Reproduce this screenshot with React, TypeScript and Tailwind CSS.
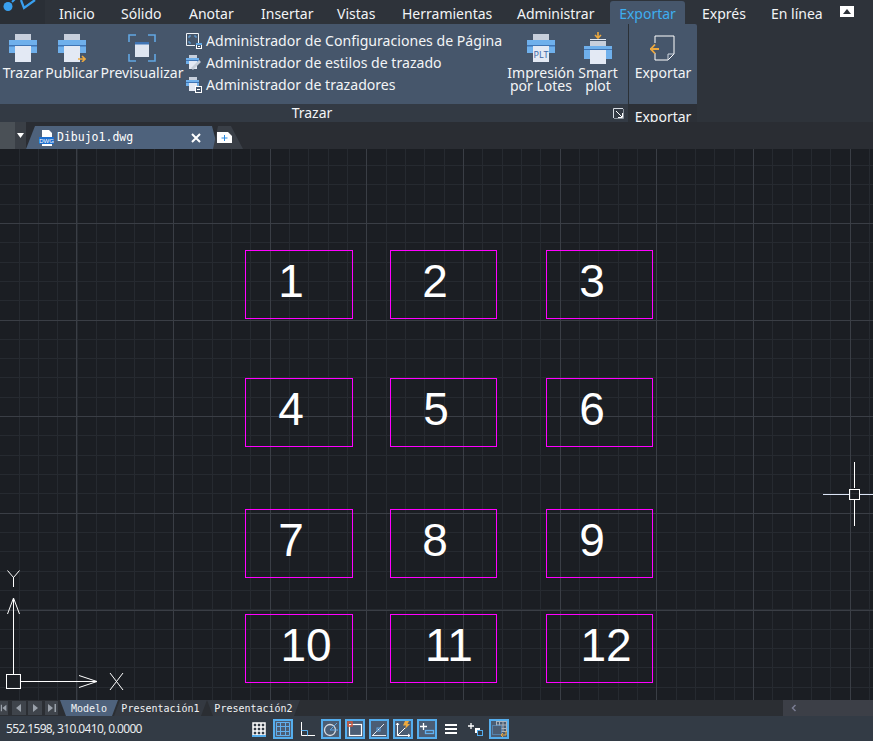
const minorX = Array.from({ length: 46 }, (_, i) => Math.floor(270.3 + (i - 14) * 19.33) + 0.5)
const minorY = Array.from({ length: 30 }, (_, i) => Math.floor(171 + (i - 9) * 19.33) + 0.5)
const majorX = [76.5, 173.5, 270.5, 366.5, 463.5, 560.5, 656.5, 753.5, 850.5]
const majorY = [74.5, 171.5, 267.5, 364.5, 461.5]

const boxes = [
  { n: '1', x: 245, y: 101, w: 108, tx: 291 },
  { n: '2', x: 390, y: 101, w: 107, tx: 435 },
  { n: '3', x: 546, y: 101, w: 107, tx: 592 },
  { n: '4', x: 245, y: 229, w: 108, tx: 291 },
  { n: '5', x: 390, y: 229, w: 107, tx: 436 },
  { n: '6', x: 546, y: 229, w: 107, tx: 592 },
  { n: '7', x: 245, y: 360, w: 108, tx: 291 },
  { n: '8', x: 390, y: 360, w: 107, tx: 435 },
  { n: '9', x: 546, y: 360, w: 107, tx: 592 },
  { n: '10', x: 245, y: 465, w: 108, tx: 306 },
  { n: '11', x: 390, y: 465, w: 107, tx: 449 },
  { n: '12', x: 546, y: 465, w: 107, tx: 606 },
]

const menu = [
  { t: 'Inicio', cls: 'w-[62px]' },
  { t: 'Sólido', cls: 'w-[68px]' },
  { t: 'Anotar', cls: 'w-[72px]' },
  { t: 'Insertar', cls: 'w-[76px]' },
  { t: 'Vistas', cls: 'w-[65px]' },
  { t: 'Herramientas', cls: 'w-[115px]' },
  { t: 'Administrar', cls: 'w-[93px]' },
]

function Printer({ badge }: { badge?: boolean }) {
  return (
    <svg width="28" height="28" viewBox="0 0 28 28">
      <rect x="6" y="0" width="16" height="6" fill="#c7cfdc" />
      <rect x="0" y="6" width="28" height="13" fill="#6fb0ec" />
      <rect x="0" y="11" width="28" height="1.5" fill="#3f74b4" />
      <rect x="6" y="12" width="16" height="16" fill="#e3e9f4" />
      {badge && <path d="M20 25h7M24 22l3 3-3 3" stroke="#eda93f" strokeWidth="1.6" fill="none" />}
    </svg>
  )
}

function Preview() {
  return (
    <svg width="28" height="28" viewBox="0 0 28 28" fill="none">
      <path d="M1 8V1h7M20 1h7v7M27 20v7h-7M8 27H1v-7" stroke="#62a6e2" strokeWidth="1.6" />
      <rect x="7" y="8" width="14" height="15" fill="#dfe5f0" />
      <rect x="7" y="8" width="14" height="2.500" fill="#3f74b4" />
    </svg>
  )
}

function SmallIcon({ kind }: { kind: 'page' | 'style' | 'plot' }) {
  if (kind === 'page') {
    return (
      <svg width="16" height="16" viewBox="0 0 16 16" fill="none">
        <path d="M.5 12.500V.5h12v9.500M.5 12.500H9" stroke="#f0f3f7" />
        <path d="M3 5V3h2M3 8v2h2M8 3h2v2" stroke="#62a6e2" />
        <rect x="10.500" y="10.500" width="5" height="5" fill="#46566b" stroke="#fff" />
        <rect x="10" y="10" width="6" height="2" fill="#62a6e2" />
        <rect x="12" y="13" width="2" height="1" fill="#fff" />
      </svg>
    )
  }
  return (
    <svg width="16" height="16" viewBox="0 0 16 16" fill="none">
      <rect x="3" y="0" width="8" height="3" fill="#c7cfdc" />
      <rect x="0" y="3" width="13" height="6" fill="#6fb0ec" />
      <rect x="0" y="5" width="13" height="1" fill="#3f74b4" />
      <rect x="3" y="6" width="8" height="8" fill="#e3e9f4" />
      {kind === 'style' ? (
        <path d="M6 14l8-8" stroke="#c6ced9" strokeWidth="2.600" />
      ) : (
        <>
          <rect x="9.500" y="9.500" width="6" height="6" fill="#46566b" stroke="#fff" />
          <rect x="11" y="12" width="3" height="1" fill="#fff" />
        </>
      )}
    </svg>
  )
}

function BatchPlot() {
  return (
    <svg width="28" height="28" viewBox="0 0 28 28">
      <rect x="6" y="0" width="16" height="6" fill="#c7cfdc" />
      <rect x="0" y="6" width="28" height="13" fill="#6fb0ec" />
      <rect x="0" y="11" width="28" height="1.500" fill="#3f74b4" />
      <rect x="6" y="12" width="16" height="16" fill="#e3e9f4" />
      <text x="14" y="24" textAnchor="middle" fontSize="9" fill="#3f6aa8" fontFamily="'Noto Sans', sans-serif">PLT</text>
    </svg>
  )
}

function SmartPlot() {
  return (
    <svg width="28" height="32" viewBox="0 0 28 32" className="-mb-[2px]">
      <path d="M14 0v5M11 3l3 3 3-3" stroke="#eda93f" strokeWidth="1.600" fill="none" />
      <rect x="6" y="7" width="16" height="1" fill="#e3e9f4" />
      <rect x="6" y="9" width="16" height="5" fill="#c7cfdc" />
      <rect x="0" y="14" width="28" height="13" fill="#6fb0ec" />
      <rect x="0" y="17" width="28" height="1" fill="#3f74b4" />
      <rect x="6" y="18" width="16" height="14" fill="#e3e9f4" />
    </svg>
  )
}

function ExportIcon() {
  return (
    <svg width="26" height="26" viewBox="0 0 26 26" fill="none">
      <path d="M5 8V1h19v18l-6 6H5v-7" stroke="#fff" />
      <path d="M18 25v-6h6" stroke="#cfd6e0" />
      <path d="M0 14h9M5 9.500L.8 14 5 18.500" stroke="#eda93f" strokeWidth="1.800" />
    </svg>
  )
}

function BigButton({ label, icon, className }: { label: React.ReactNode; icon: React.ReactNode; className: string }) {
  return (
    <div className={`flex flex-col items-center shrink-0 ${className}`}>
      <div className="flex items-start justify-center">{icon}</div>
      <div className="text-center leading-[13px] mt-[4px] whitespace-nowrap">{label}</div>
    </div>
  )
}

function Ribbon() {
  return (
    <div className="flex h-[98px] shrink-0">
      <div className="w-[628px] flex flex-col">
        <div className="h-[80px] bg-[#46566b] flex pt-[10px] relative">
          <BigButton className="w-[46px]" label="Trazar" icon={<Printer />} />
          <BigButton className="w-[52px]" label="Publicar" icon={<Printer badge />} />
          <BigButton className="w-[84px] ml-[2px]" label="Previsualizar" icon={<Preview />} />
          <div className="ml-[2px] -mt-[4px] flex flex-col w-[319px]">
            {[
              { kind: 'page' as const, t: 'Administrador de Configuraciones de Página' },
              { kind: 'style' as const, t: 'Administrador de estilos de trazado' },
              { kind: 'plot' as const, t: 'Administrador de trazadores' },
            ].map((r) => (
              <div key={r.t} className="h-[22px] flex items-center gap-[4px] whitespace-nowrap text-[14.1px]">
                <SmallIcon kind={r.kind} />
                <span>{r.t}</span>
              </div>
            ))}
          </div>
          <BigButton className="w-[72px]" label={<>Impresión<br />por Lotes</>} icon={<BatchPlot />} />
          <BigButton className="w-[42px] -mt-[2px]" label={<>Smart<br />plot</>} icon={<SmartPlot />} />
        </div>
        <div className="h-[18px] bg-[#333a44] relative flex items-center justify-center pr-[4px]">
          <span className="leading-none">Trazar</span>
          <svg className="absolute right-[4px] top-[4px]" width="11" height="11" viewBox="0 0 11 11" fill="none">
            <path d="M0.500 10V.5H10" stroke="#d7dce3" />
            <path d="M3 3l6 6M5 9.500h4.500V5" stroke="#fff" />
            <path d="M10.500 1v9.500H1" stroke="#8d949e" />
          </svg>
        </div>
      </div>
      <div className="w-[1px] bg-[#2b3036]" />
      <div className="w-[68px] flex flex-col">
        <div className="h-[80px] bg-[#46566b] flex flex-col items-center pt-[11px] rounded-tr-[2px]">
          <ExportIcon />
          <div className="mt-[5px] leading-[13px]">Exportar</div>
        </div>
        <div className="h-[18px] bg-[#2c3037] flex justify-center overflow-hidden">
          <span className="leading-[26px]">Exportar</span>
        </div>
      </div>
    </div>
  )
}

function DrawingSheet() {
  return (
    <div className="relative h-[551px] bg-[#1b1e23] overflow-hidden shrink-0">
      <svg className="absolute inset-0" width="873" height="551">
        {minorX.map((x) => <line key={x} x1={x} x2={x} y1="0" y2="551" stroke="#262a30" />)}
        {minorY.map((y) => <line key={y} y1={y} y2={y} x1="0" x2="873" stroke="#262a30" />)}
        {majorX.map((x) => <line key={x} x1={x} x2={x} y1="0" y2="551" stroke="#3a3e45" />)}
        {majorY.map((y) => <line key={y} y1={y} y2={y} x1="0" x2="873" stroke="#3a3e45" />)}
      </svg>
      {boxes.map((b) => (
        <div key={b.n}>
          <div className="absolute h-[69px] border border-[#ff00ff]" style={{ left: b.x, top: b.y, width: b.w }} />
          <div
            className="absolute w-[80px] -ml-[40px] text-center text-white text-[46px] leading-[69px] font-['Liberation_Sans',sans-serif]"
            style={{ left: b.tx, top: b.y - 3 }}
          >
            {b.n}
          </div>
        </div>
      ))}
      <svg className="absolute left-0 top-[421px]" width="130" height="130" viewBox="0 420 130 130" fill="none" stroke="#fff">
        <rect x="6.500" y="524.500" width="14" height="14" />
        <path d="M13.500 524V448.500M7.500 464l6-16 6 16" />
        <path d="M21 531.500h76M79 525.500l18 6-18 6" />
        <path d="M7.500 420.500l6 7 6-7M13.500 427v10" />
        <path d="M110 523l13 17M123 523l-13 17" />
      </svg>
      <svg className="absolute left-[823px] top-[313px]" width="50" height="64" viewBox="0 0 50 64" fill="none">
        <path d="M0 32.500h26M37 32.500h13" stroke="#dbe4f5" />
        <path d="M31.500 0v26M31.500 37v27" stroke="#fff" />
        <rect x="26.500" y="27.500" width="10" height="10" stroke="#fff" />
      </svg>
    </div>
  )
}

function NavButton({ d, className }: { d: string; className: string }) {
  return (
    <div className={`h-[14px] bg-[#3f444b] flex items-center justify-center ${className}`}>
      <svg width="10" height="10" viewBox="0 0 10 10" fill="#9aa1aa"><path d={d} /></svg>
    </div>
  )
}

function StatusIcon({ active, children }: { active?: boolean; children: React.ReactNode }) {
  return (
    <div className={`w-[20px] h-[20px] flex items-center justify-center shrink-0 ${active ? 'bg-[#4b5d74] border-2 border-[#55aeee]' : ''}`}>
      <svg width="16" height="16" viewBox="0 0 16 16" fill="none" stroke="#fff" className="shrink-0">{children}</svg>
    </div>
  )
}

function StatusBar() {
  return (
    <div className="h-[25px] bg-[#333b45] flex items-center shrink-0">
      <div className="w-[249px] pl-[6px] text-[12px] tracking-[-0.65px] text-[#e8ebee] whitespace-nowrap">552.1598, 310.0410, 0.0000</div>
      <div className="flex items-center gap-[4px]">
        <StatusIcon>
          <path d="M2 2h12v12H2zM2 6h12M2 10h12M6 2v12M10 2v12" strokeWidth="1.500" />
          <path d="M1 15h14" stroke="#55aeee" strokeWidth="2" />
        </StatusIcon>
        <StatusIcon active>
          <path d="M1.500 1.500h13v13h-13zM1.500 5.500h13M1.500 10.500h13M5.500 1.500v13M10.500 1.500v13" stroke="#62b0ee" />
        </StatusIcon>
        <StatusIcon>
          <path d="M2.500 1v13.500H16" />
          <path d="M2.500 9.500h6v5" stroke="#55aeee" />
        </StatusIcon>
        <StatusIcon active>
          <circle cx="7" cy="9" r="5.500" stroke="#d7dce3" strokeWidth="1.300" />
          <path d="M7 9l7-7M7 9h8" stroke="#62a6e2" />
        </StatusIcon>
        <StatusIcon active>
          <rect x="2.500" y="3.500" width="12" height="11" strokeWidth="1.200" />
          <rect x="1" y="1" width="4" height="4" stroke="#d0583f" strokeWidth="1.500" />
        </StatusIcon>
        <StatusIcon active>
          <path d="M1 14.500h14M2 14L13 3" stroke="#e6ebf2" />
          <rect x="6" y="7" width="3" height="3" stroke="#62a6e2" />
        </StatusIcon>
        <StatusIcon active>
          <path d="M2.500 2v12.500H15M2.500 14.500L10 7M1 4l1.500-2L4 4M13 13l2 1.500-2 1.500" />
          <path d="M10 0h4l-1.500 3H15l-5 5 1-3.500H8z" fill="#eda93f" stroke="none" />
        </StatusIcon>
        <StatusIcon active>
          <path d="M1 5.500h7M4.500 2v7" strokeWidth="1.300" />
          <rect x="6.500" y="9.500" width="8" height="3" stroke="#62b0ee" strokeWidth="1.300" />
        </StatusIcon>
        <div className="w-[12px] h-[10px] ml-[4px] flex flex-col justify-between">
          <div className="h-[2px] bg-white" />
          <div className="h-[2px] bg-white" />
          <div className="h-[2px] bg-white" />
        </div>
        <svg className="ml-[7px]" width="16" height="16" viewBox="0 0 16 16" fill="none">
          <path d="M0 5h6M3 2v6" stroke="#fff" strokeWidth="1.300" />
          <rect x="7" y="7" width="5" height="5" fill="#fff" />
          <rect x="9.500" y="9.500" width="5" height="5" fill="#333b45" stroke="#55aeee" />
        </svg>
        <div className="ml-[1px]">
          <StatusIcon active>
            <rect x="5.500" y="0.500" width="10" height="10" stroke="#aab2bc" />
            <path d="M8.500 .5v10M12 .5v10M5.500 4h10M5.500 7.500h10" stroke="#aab2bc" />
            <rect x="1.500" y="4.500" width="9" height="9" fill="#4b5d74" stroke="#62a6e2" strokeDasharray="1 1" />
            <path d="M15 10v4h-5M12 12l-2 2 2 2" stroke="#eda93f" />
          </StatusIcon>
        </div>
      </div>
    </div>
  )
}

export default function App() {
  return (
    <div className="w-[873px] h-[741px] bg-[#2e333a] overflow-hidden flex flex-col text-[14px] text-[#f2f4f6] font-['Noto_Sans',sans-serif]">
      <div className="h-[24px] flex items-center shrink-0 relative">
        <svg className="absolute left-0 top-0 w-[45px] h-[24px]" viewBox="0 0 45 24" fill="none">
          <rect width="45" height="24" fill="#2a2f36" />
          <circle cx="8" cy="6.500" r="4.500" fill="#39a0f0" />
          <path d="M12 2l3-3" stroke="#39a0f0" strokeWidth="2" />
          <path d="M21 0l3 8 11-8" stroke="#39a0f0" strokeWidth="2.200" />
        </svg>
        <div className="ml-[59px] flex pt-[2px]">
          {menu.map((m) => <span key={m.t} className={`whitespace-nowrap ${m.cls}`}>{m.t}</span>)}
        </div>
        <div className="h-[23px] mt-[1px] pt-[1px] w-[75px] rounded-t-[3px] bg-[#46566b] text-[#3eaef0] flex items-center justify-center">Exportar</div>
        <span className="ml-[17px] w-[69px] pt-[2px]">Exprés</span>
        <span className="w-[69px] pt-[2px] whitespace-nowrap">En línea</span>
        <div className="w-[14px] h-[11px] mb-[2px] bg-white flex items-center justify-center">
          <svg width="8" height="5" viewBox="0 0 8 5"><path d="M0 5L4 0l4 5z" fill="#2e333a" /></svg>
        </div>
      </div>
      <Ribbon />
      <div className="h-[27px] bg-[#2a2d33] flex shrink-0">
        <div className="w-[15px] bg-[#4a5056]" />
        <div className="w-[11px] bg-[#3a3f46] flex items-center justify-center">
          <svg width="7" height="5" viewBox="0 0 7 5"><path d="M0 0h7L3.500 5z" fill="#fff" /></svg>
        </div>
        <div className="mt-[4px] w-[192px] h-[23px] bg-[#4e627c] flex items-center [clip-path:polygon(9px_0,186px_0,192px_100%,0_100%)]">
          <svg className="ml-[13px]" width="15" height="16" viewBox="0 0 15 16">
            <path d="M3 0h7l3 3v13H3z" fill="#fff" />
            <rect x="0" y="7" width="15" height="7" fill="#1d6fd0" />
            <text x="7.500" y="13" textAnchor="middle" fontSize="6" fill="#fff" fontFamily="'Liberation Sans', sans-serif">DWG</text>
          </svg>
          <span className="ml-[3px] text-[11.5px] text-white font-['DejaVu_Sans_Mono',monospace]">Dibujo1.dwg</span>
          <svg className="ml-[58px]" width="10" height="10" viewBox="0 0 10 10"><path d="M1 1l8 8M9 1l-8 8" stroke="#fff" strokeWidth="2" /></svg>
        </div>
        <div className="mt-[4px] -ml-[5px] w-[30px] h-[23px] bg-[#3a3f47] flex items-start justify-start pt-[6px] pl-[4px] [clip-path:polygon(5px_0,18px_0,30px_100%,0_100%)]">
          <svg width="15" height="11" viewBox="0 0 15 11">
            <path d="M0 0h11l4 4v7H0z" fill="#fff" />
            <path d="M7.500 3v6M4.500 6h6" stroke="#2c8be0" />
          </svg>
        </div>
      </div>
      <DrawingSheet />
      <div className="h-[16px] bg-[#2b2e33] flex items-center shrink-0 text-[10px] text-[#f0f2f4] font-['DejaVu_Sans_Mono',monospace]">
        <NavButton className="w-[8px]" d="M1 1h1.500v8H1zM8 1v8L3 5z" />
        <NavButton className="w-[14px] ml-[4px]" d="M7 1v8L2 5z" />
        <NavButton className="w-[14px] ml-[2px]" d="M3 1v8l5-4z" />
        <NavButton className="w-[13px] ml-[3px]" d="M7.500 1H9v8H7.500zM1 1v8l5-4z" />
        <div className="ml-[2px] h-[16px] w-[58px] bg-[#4e627c] flex items-center justify-center [clip-path:polygon(0_0,100%_0,calc(100%-6px)_100%,6px_100%)]">Modelo</div>
        <div className="-ml-[4px] h-[16px] w-[93px] bg-[#343941] flex items-center justify-center [clip-path:polygon(6px_0,100%_0,calc(100%-6px)_100%,0_100%)]">Presentación1</div>
        <div className="h-[16px] w-[93px] bg-[#343941] flex items-center justify-center [clip-path:polygon(0_0,100%_0,calc(100%-6px)_100%,6px_100%)]">Presentación2</div>
        <div className="ml-auto w-[90px] h-[16px] bg-[#3c3f47] flex items-center pl-[8px]">
          <svg width="6" height="8" viewBox="0 0 6 8" fill="none"><path d="M4.500 1l-3 3 3 3" stroke="#7a7d93" strokeWidth="1.500" /></svg>
        </div>
      </div>
      <StatusBar />
    </div>
  )
}
